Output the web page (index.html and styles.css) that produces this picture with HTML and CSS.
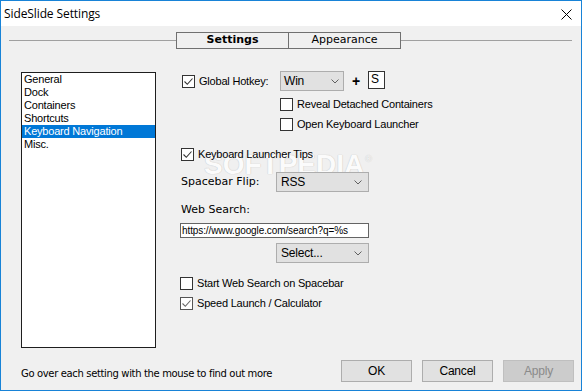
FILE: index.html
```html
<!DOCTYPE html>
<html>
<head>
<meta charset="utf-8">
<title>SideSlide Settings</title>
<link rel="stylesheet" href="styles.css">
</head>
<body>
<div class="window">
  <div class="titlebar">
    <span class="title">SideSlide Settings</span>
    <svg class="close" width="11" height="11" viewBox="0 0 11 11"><path d="M0.5 0.5 L10.5 10.5 M10.5 0.5 L0.5 10.5" stroke="#000" stroke-width="1" fill="none"/></svg>
  </div>
  <div class="client">
    <div class="watermark">SOFTPEDIA<span class="reg">®</span></div>
    <div class="tabrow">
      <div class="rule rule-left"></div>
      <div class="tabs">
        <div class="tab tab-active">Settings</div>
        <div class="tab tab-second">Appearance</div>
      </div>
      <div class="rule rule-right"></div>
    </div>

    <div class="main">
      <ul class="list">
        <li>General</li>
        <li>Dock</li>
        <li>Containers</li>
        <li>Shortcuts</li>
        <li class="selected">Keyboard Navigation</li>
        <li>Misc.</li>
      </ul>

      <div class="panel">
        <div class="row row-hotkey">
          <span class="check checked"><svg width="11" height="11" viewBox="0 0 11 11"><path d="M1.5 5.5 L4.3 8.3 L9.5 2.5" stroke="#333" stroke-width="1.1" fill="none"/></svg></span>
          <span class="label hotkey-label">Global Hotkey:</span>
          <div class="combo combo-win"><span>Win</span><svg class="chev" width="8" height="5" viewBox="0 0 8 5"><path d="M0.5 0.5 L4 4 L7.5 0.5" stroke="#606060" fill="none"/></svg></div>
          <span class="plus">+</span>
          <div class="keybox">S</div>
        </div>
        <div class="row row-sub gap7">
          <span class="check"></span>
          <span class="label">Reveal Detached Containers</span>
        </div>
        <div class="row row-sub gap7">
          <span class="check"></span>
          <span class="label">Open Keyboard Launcher</span>
        </div>
        <div class="row row-tips">
          <span class="check checked"><svg width="11" height="11" viewBox="0 0 11 11"><path d="M1.5 5.5 L4.3 8.3 L9.5 2.5" stroke="#333" stroke-width="1.1" fill="none"/></svg></span>
          <span class="label">Keyboard Launcher Tips</span>
        </div>
        <div class="row row-flip">
          <span class="wide-label flip-label">Spacebar Flip:</span>
          <div class="combo combo-wide"><span>RSS</span><svg class="chev" width="8" height="5" viewBox="0 0 8 5"><path d="M0.5 0.5 L4 4 L7.5 0.5" stroke="#606060" fill="none"/></svg></div>
        </div>
        <div class="row row-web">
          <span class="wide-label">Web Search:</span>
        </div>
        <div class="row row-url">
          <div class="textbox">https://www.google.com/search?q=%s</div>
        </div>
        <div class="row row-select">
          <div class="combo combo-wide"><span>Select...</span><svg class="chev" width="8" height="5" viewBox="0 0 8 5"><path d="M0.5 0.5 L4 4 L7.5 0.5" stroke="#606060" fill="none"/></svg></div>
        </div>
        <div class="row row-start">
          <span class="check"></span>
          <span class="label">Start Web Search on Spacebar</span>
        </div>
        <div class="row row-speed gap7">
          <span class="check checked dim"><svg width="11" height="11" viewBox="0 0 11 11"><path d="M1.5 5.5 L4.3 8.3 L9.5 2.5" stroke="#666" stroke-width="1.1" fill="none"/></svg></span>
          <span class="label">Speed Launch / Calculator</span>
        </div>
      </div>
    </div>

    <div class="footer">
      <span class="status">Go over each setting with the mouse to find out more</span>
      <div class="buttons">
        <div class="btn">OK</div>
        <div class="btn">Cancel</div>
        <div class="btn btn-disabled">Apply</div>
      </div>
    </div>
  </div>
</div>
</body>
</html>
```

FILE: styles.css
```css
* { box-sizing: border-box; }
html, body { margin: 0; padding: 0; }
body {
  width: 582px;
  height: 391px;
  overflow: hidden;
  background: #f0f0f0;
  font-family: "Liberation Sans", Arial, sans-serif;
  font-size: 11px;
  color: #000;
}
.window {
  width: 582px;
  height: 391px;
  border: 1px solid #1883d7;
  display: flex;
  flex-direction: column;
  background: #f0f0f0;
}
.titlebar {
  height: 25px;
  background: #fff;
  display: flex;
  align-items: center;
  padding: 0 9px 0 3px;
  flex: none;
}
.title {
  font-family: "Segoe UI", "Open Sans", "Noto Sans", sans-serif;
  font-size: 12px;
  letter-spacing: -0.1px;
  color: #000;
}
.close { margin-left: auto; margin-top: 1px; }

.client {
  position: relative;
  flex: 1;
  display: flex;
  flex-direction: column;
  background: #f0f0f0;
}

.tabrow {
  margin-top: 6px;
  height: 17px;
  padding: 0 9px 0 8px;
  display: flex;
  align-items: center;
}
.rule { height: 1px; background: #a0a0a0; }
.rule-left { width: 167px; }
.rule-right { flex: 1; }
.tabs {
  display: flex;
  height: 17px;
  border: 1px solid #707070;
}
.tab {
  width: 111px;
  height: 15px;
  line-height: 14px;
  text-align: center;
  font-family: "DejaVu Sans", Verdana, sans-serif;
  font-size: 11px;
}
.tab-active { font-weight: bold; }
.tab-second { width: 112px; border-left: 1px solid #707070; }

.main {
  position: relative;
  z-index: 1;
  display: flex;
  align-items: flex-start;
  margin-top: 22px;
  padding-left: 20px;
}
.list {
  list-style: none;
  margin: 1px 0 0 0;
  padding: 0;
  width: 135px;
  height: 276px;
  background: #fff;
  border: 1px solid #1e1e1e;
}
.list li {
  height: 13px;
  line-height: 13px;
  padding-left: 2px;
  letter-spacing: -0.2px;
  white-space: nowrap;
}
.list li.selected { background: #0078d7; color: #fff; }

.panel {
  margin-left: 24px;
  display: flex;
  flex-direction: column;
}
.row { display: flex; align-items: center; }
.label { letter-spacing: -0.2px; white-space: nowrap; line-height: 13px; }
.check {
  width: 13px;
  height: 13px;
  border: 1px solid #333;
  background: #fff;
  margin-right: 4px;
  flex: none;
  display: flex;
  align-items: center;
  justify-content: center;
}
.check.dim { border-color: #555; }

.row-hotkey { height: 20px; align-items: flex-start; padding-left: 2px; }
.row-hotkey .check { margin-top: 4px; }
.row-hotkey .hotkey-label { width: 81px; margin-top: 4px; }
.combo {
  height: 20px;
  background: #e1e1e1;
  border: 1px solid #adadad;
  display: flex;
  align-items: center;
  padding: 0 4px 0 3px;
  letter-spacing: -0.2px;
}
.combo .chev { margin-left: auto; }
.combo-win { width: 64px; font-size: 12px; }
.combo-wide { width: 93px; padding-right: 6px; padding-left: 4px; font-size: 12px; }
.plus {
  width: 24px;
  text-align: center;
  font-weight: bold;
  font-size: 14px;
  line-height: 20px;
}
.keybox {
  width: 17px;
  height: 18px;
  border: 1px solid #333;
  background: #fff;
  padding-left: 2px;
  line-height: 15px;
  font-size: 12px;
}

.row-sub { padding-left: 100px; height: 13px; }
.gap7 { margin-top: 7px; }
.row-tips { margin-top: 17px; padding-left: 1px; height: 13px; }
.row-flip { margin-top: 11px; height: 20px; }
.wide-label {
  font-family: "DejaVu Sans", Verdana, sans-serif;
  font-size: 11px;
  line-height: 14px;
  padding-left: 1px;
}
.flip-label { width: 96px; }
.row-web { margin-top: 11px; height: 14px; }
.row-url { margin-top: 6px; }
.textbox {
  width: 189px;
  height: 15px;
  border: 1px solid #646464;
  background: #fff;
  font-size: 10px;
  line-height: 13px;
  padding-left: 1px;
  letter-spacing: -0.1px;
  white-space: nowrap;
}
.row-select { margin-top: 5px; padding-left: 96px; }
.row-start { margin-top: 14px; height: 13px; }

.footer {
  margin-top: auto;
  display: flex;
  align-items: flex-end;
  padding: 0 7px 8px 20px;
}
.status {
  font-family: "DejaVu Sans", Verdana, sans-serif;
  font-size: 10px;
  letter-spacing: -0.35px;
  line-height: 13px;
  margin-bottom: 2px;
}
.buttons {
  margin-left: auto;
  display: flex;
  gap: 10px;
}
.btn {
  width: 71px;
  height: 22px;
  background: #e1e1e1;
  border: 1px solid #adadad;
  text-align: center;
  line-height: 20px;
  font-size: 12px;
  letter-spacing: -0.2px;
}
.btn-disabled {
  background: #cccccc;
  border-color: #bfbfbf;
  color: #8a8a8a;
}

.watermark {
  position: absolute;
  z-index: 0;
  left: 203px;
  top: 129px;
  font-family: "Liberation Sans", Arial, sans-serif;
  font-weight: bold;
  font-size: 28px;
  line-height: 20px;
  color: #fbfbfb;
  text-shadow: 0 0 1px #c8c8c8, 0 0 1px #d0d0d0;
  pointer-events: none;
}
.watermark .reg {
  font-size: 9px;
  vertical-align: top;
  margin-left: 1px;
  font-weight: normal;
  line-height: 9px;
}
```
